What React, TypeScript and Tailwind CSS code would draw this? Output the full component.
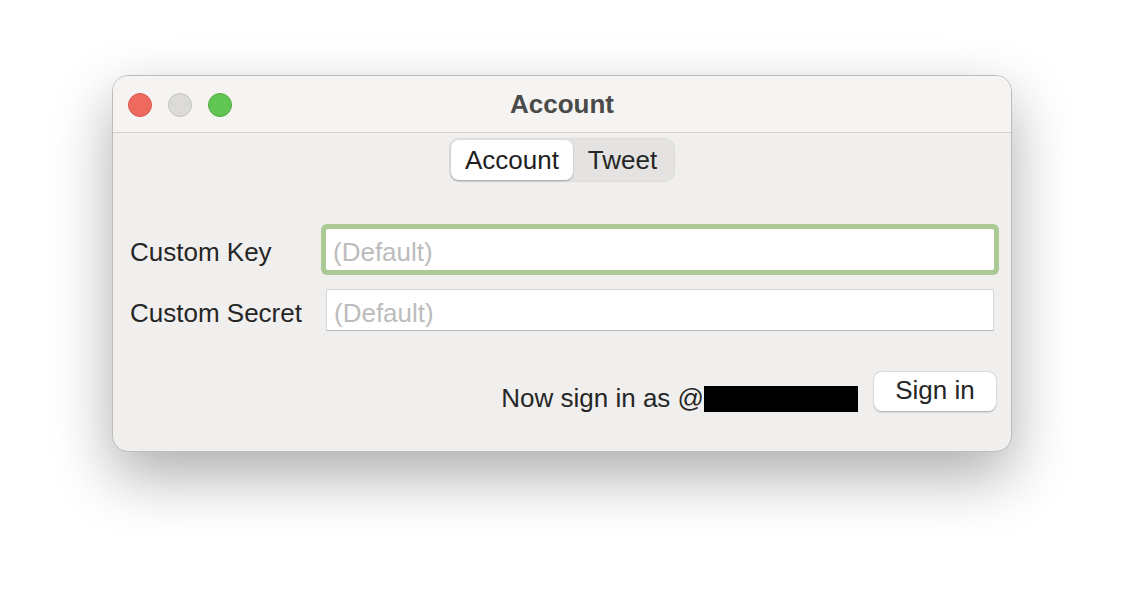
export default function App() {
  const font = { fontFamily: '"Liberation Sans", Arial, sans-serif' };

  return (
    <div className="w-[1124px] h-[600px] bg-white pt-[75px] pl-[112px]" style={font}>
      <div className="w-[900px] h-[377px] rounded-[16px] bg-[#f0efed] border border-[#bdbcba] shadow-[0_24px_60px_rgba(0,0,0,0.32)] overflow-hidden flex flex-col">
        {/* title bar */}
        <div className="h-[57px] shrink-0 bg-[#f5f4f2] border-b border-[#d3d2d0] flex items-center relative">
          <div className="flex items-center gap-[16px] pl-[15px] pt-[1px]">
            <span className="w-[24px] h-[24px] rounded-full bg-[#ee6a5f] border border-[#d9584d]" />
            <span className="w-[24px] h-[24px] rounded-full bg-[#dcdbd8] border border-[#c4c3c0]" />
            <span className="w-[24px] h-[24px] rounded-full bg-[#61c554] border border-[#50ab42]" />
          </div>
          <div className="absolute inset-0 flex items-center justify-center text-[26px] font-bold text-[#4a4a4a]">
            Account
          </div>
        </div>

        {/* tabs */}
        <div className="flex justify-center mt-[5px]">
          <div className="flex items-center h-[44px] p-[2px] pl-[1px] rounded-[10px] bg-[#e4e3e1] border border-[#dddcda]">
            <div className="w-[122px] h-[40px] flex items-center justify-center rounded-[8px] bg-white shadow-[0_1px_2px_rgba(0,0,0,0.28)] text-[26px] text-[#1f1f1f]">
              Account
            </div>
            <div className="w-[99px] h-[40px] flex items-center justify-center text-[26px] text-[#262626]">
              Tweet
            </div>
          </div>
        </div>

        {/* form */}
        <div className="flex flex-col gap-[19px] mt-[47px] pl-[17px] pr-[17px]">
          <div className="flex items-center h-[41px]">
            <div className="w-[196px] h-[41px] flex items-center pt-[6px] text-[26px] text-[#262626]">Custom Key</div>
            <div className="flex-1 h-[41px] bg-white rounded-[2px] shadow-[0_0_0_5px_#aac995] flex items-center pl-[7px] pt-[6px] text-[26px] text-[#bcbcbc]">
              (Default)
            </div>
          </div>
          <div className="flex items-center h-[42px]">
            <div className="w-[196px] h-[42px] flex items-center pt-[6px] text-[26px] text-[#262626]">Custom Secret</div>
            <div className="flex-1 h-[42px] bg-white border border-[#d6d5d3] border-b-[#b9b8b6] flex items-center pl-[7px] pt-[6px] text-[26px] text-[#bcbcbc]">
              (Default)
            </div>
          </div>
        </div>

        {/* sign in */}
        <div className="flex items-stretch justify-end h-[40px] mt-[41px] pr-[15px]">
          <div className="flex items-end text-[26px] leading-[26px] text-[#262626]">
            <span className="mb-[1px]">Now sign in as @</span>
            <span className="w-[154px] h-[26px] bg-black" />
          </div>
          <button className="ml-[16px] w-[122px] h-[39px] rounded-[8px] bg-white shadow-[0_0.5px_2px_rgba(0,0,0,0.3)] text-[26px] text-[#262626] flex items-center justify-center pb-[2px]">
            Sign in
          </button>
        </div>
      </div>
    </div>
  );
}
